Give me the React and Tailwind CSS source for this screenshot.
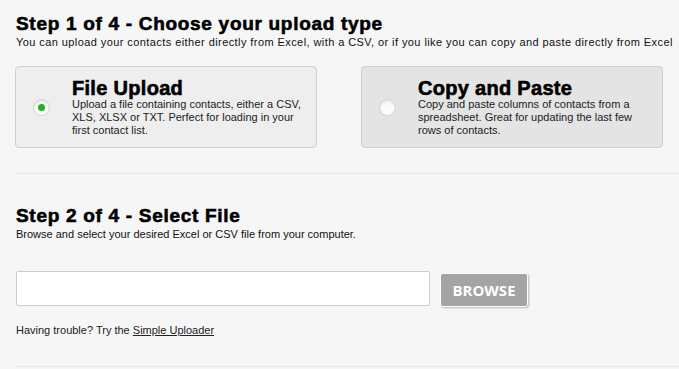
export default function App() {
  return (
    <div
      className="h-[369px] w-[679px] overflow-hidden bg-[#f6f6f6] text-[#111]"
      style={{ fontFamily: '"Liberation Sans", Arial, sans-serif' }}
    >
      <section className="pl-4 pt-[13px]">
        <h2 className="text-[19px] font-bold leading-[22px] tracking-[0.7px] text-black [-webkit-text-stroke:0.6px_black]">
          Step 1 of 4 - Choose your upload type
        </h2>
        <p className="text-[11px] leading-[14px] tracking-[0.42px]">
          You can upload your contacts either directly from Excel, with a CSV, or if you like you can copy and paste directly from Excel
        </p>

        <div className="-ml-px mt-[17px] flex gap-[44px]">
          <OptionCard
            selected
            title="File Upload"
            text="Upload a file containing contacts, either a CSV, XLS, XLSX or TXT. Perfect for loading in your first contact list."
          />
          <OptionCard
            title="Copy and Paste"
            text="Copy and paste columns of contacts from a spreadsheet. Great for updating the last few rows of contacts."
          />
        </div>
      </section>

      <div className="ml-[15px] mt-[25px] border-t border-[#e6e6e6]" />

      <section className="pl-4 pt-[31px]">
        <h2 className="text-[19px] font-bold leading-[22px] tracking-[0.7px] text-black [-webkit-text-stroke:0.6px_black]">
          Step 2 of 4 - Select File
        </h2>
        <p className="text-[11px] leading-[14px]">
          Browse and select your desired Excel or CSV file from your computer.
        </p>

        <div className="mt-[30px] flex items-start gap-[10px]">
          <input
            type="text"
            className="h-[35px] w-[414px] rounded-[2px] border border-[#cccccc] bg-white px-2 text-sm outline-none"
          />
          <button
            className="mt-[2px] h-[34px] w-[88px] rounded-[3px] border border-white bg-[#a4a4a4] text-[15px] font-bold text-white shadow-[1px_1px_2px_rgba(0,0,0,0.25)]"
            style={{ fontFamily: '"Open Sans", sans-serif' }}
          >
            BROWSE
          </button>
        </div>

        <p className="mt-[16px] text-[11px] leading-[14px] text-[#222]">
          Having trouble? Try the{" "}
          <a href="#" className="underline">
            Simple Uploader
          </a>
        </p>
      </section>

      <div className="ml-[15px] mt-[29px] border-t border-[#e6e6e6]" />
    </div>
  );
}

function OptionCard({ selected, title, text }) {
  return (
    <div
      className={`flex h-[82px] w-[302px] items-center rounded-[4px] border border-[#cfcfcf] ${
        selected ? "bg-[#eeeeee]" : "bg-[#e4e4e4]"
      }`}
    >
      <div className="ml-[17px] flex h-[17px] w-[17px] shrink-0 items-center justify-center rounded-full border border-[#d2d2d2] bg-gradient-to-b from-[#f4f4f4] to-white shadow-[inset_0_1px_2px_rgba(0,0,0,0.08)]">
        {selected && <span className="h-[7px] w-[7px] rounded-full bg-[#1fb31f]" />}
      </div>
      <div className="ml-[22px] pr-2">
        <h3 className="mt-[2px] text-[20px] font-bold leading-[18px] tracking-[0.3px] text-black [-webkit-text-stroke:0.6px_black]">
          {title}
        </h3>
        <p className="mt-[1px] text-[11px] leading-[13px] text-[#222]">{text}</p>
      </div>
    </div>
  );
}
